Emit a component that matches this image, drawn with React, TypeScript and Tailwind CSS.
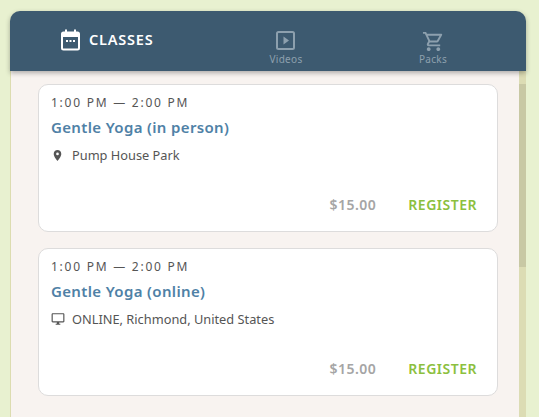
import React from 'react';
import { MdLocationOn, MdOutlineDesktopWindows, MdOutlineShoppingCart } from 'react-icons/md';

function CalendarIcon() {
  return (
    <svg width="20" height="22" viewBox="0 0 20 22" className="text-white">
      <rect x="1" y="3.5" width="17" height="17" rx="1.5" fill="none" stroke="currentColor" strokeWidth="2" />
      <path d="M1 3.5h17v4.5H1z" fill="currentColor" />
      <rect x="4" y="0.5" width="2" height="4" fill="currentColor" />
      <rect x="13" y="0.5" width="2" height="4" fill="currentColor" />
      <rect x="5" y="11" width="2" height="2" fill="currentColor" />
      <rect x="8.5" y="11" width="2" height="2" fill="currentColor" />
      <rect x="12" y="11" width="2" height="2" fill="currentColor" />
    </svg>
  );
}

function VideoIcon() {
  return (
    <svg width="20" height="20" viewBox="0 0 20 20">
      <rect x="1" y="1" width="17" height="17" rx="1.5" fill="none" stroke="currentColor" strokeWidth="2" />
      <path d="M7.5 5.5l5.5 4-5.5 4z" fill="currentColor" />
    </svg>
  );
}

interface ClassCardProps {
  title: string;
  location: string;
  online?: boolean;
}

function ClassCard({ title, location, online }: ClassCardProps) {
  return (
    <div className="h-[148px] rounded-[10px] border border-[#dddcdc] bg-white pl-3 pr-5 pt-[11px]">
      <p className="text-[12px] leading-[14px] tracking-[1.75px] text-[#555]">1:00 PM — 2:00 PM</p>
      <h3 className="mt-[7px] text-[15px] leading-[20px] font-semibold tracking-[0.35px] text-[#4f81a6]">{title}</h3>
      <div className="mt-[10px] flex items-center text-[#555]">
        <span className="flex w-[21px] items-center">
          {online ? <MdOutlineDesktopWindows size={14} /> : <MdLocationOn size={13} />}
        </span>
        <span className="text-[12.8px] leading-[16px]">{location}</span>
      </div>
      <div className="mt-[33px] flex items-center justify-end text-[14px] leading-[18px] tracking-[0.5px]">
        <span className="font-semibold text-[#a5a5a5]">$15.00</span>
        <span className="ml-8 font-semibold text-[#8cc03e]">REGISTER</span>
      </div>
    </div>
  );
}

export default function App() {
  return (
    <div className="h-[417px] w-[539px] overflow-hidden bg-[#e8f1d0] pl-[10px] pr-[13px] pt-[11px] font-['Noto_Sans','Lato',sans-serif]">
      <div className="flex h-[420px] flex-col">
        <header className="z-10 flex h-[60px] items-start rounded-t-[10px] bg-[#3d5a70] shadow-[0_2px_5px_rgba(0,0,0,0.3)]">
          <div className="ml-[51px] mt-[18px] flex w-[180px] items-center gap-[8px]">
            <CalendarIcon />
            <span className="mb-[2px] text-[14.5px] leading-[18px] font-semibold tracking-[0.8px] text-white">CLASSES</span>
          </div>
          <div className="ml-[12px] mt-[20px] flex w-[66px] flex-col items-center text-[#8da0ae]">
            <VideoIcon />
            <span className="mt-[2px] text-[10px] leading-[12px] tracking-[0.3px]">Videos</span>
          </div>
          <div className="ml-[81px] mt-[19px] flex w-[66px] flex-col items-center text-[#8da0ae]">
            <MdOutlineShoppingCart size={23} />
            <span className="text-[10px] leading-[12px] tracking-[0.3px]">Packs</span>
          </div>
        </header>
        <div className="flex min-h-0 flex-1 border-l border-[#dcdcb0] bg-[#f8f3f0]">
          <main className="flex flex-1 flex-col gap-4 pl-[27px] pr-[21px] pt-[13px]">
            <ClassCard title="Gentle Yoga (in person)" location="Pump House Park" />
            <ClassCard title="Gentle Yoga (online)" location="ONLINE, Richmond, United States" online />
          </main>
          <div className="w-[7px] bg-[#dcdcb4] pt-[13px]">
            <div className="h-[183px] bg-[#c8c8a4]" />
          </div>
        </div>
      </div>
    </div>
  );
}
